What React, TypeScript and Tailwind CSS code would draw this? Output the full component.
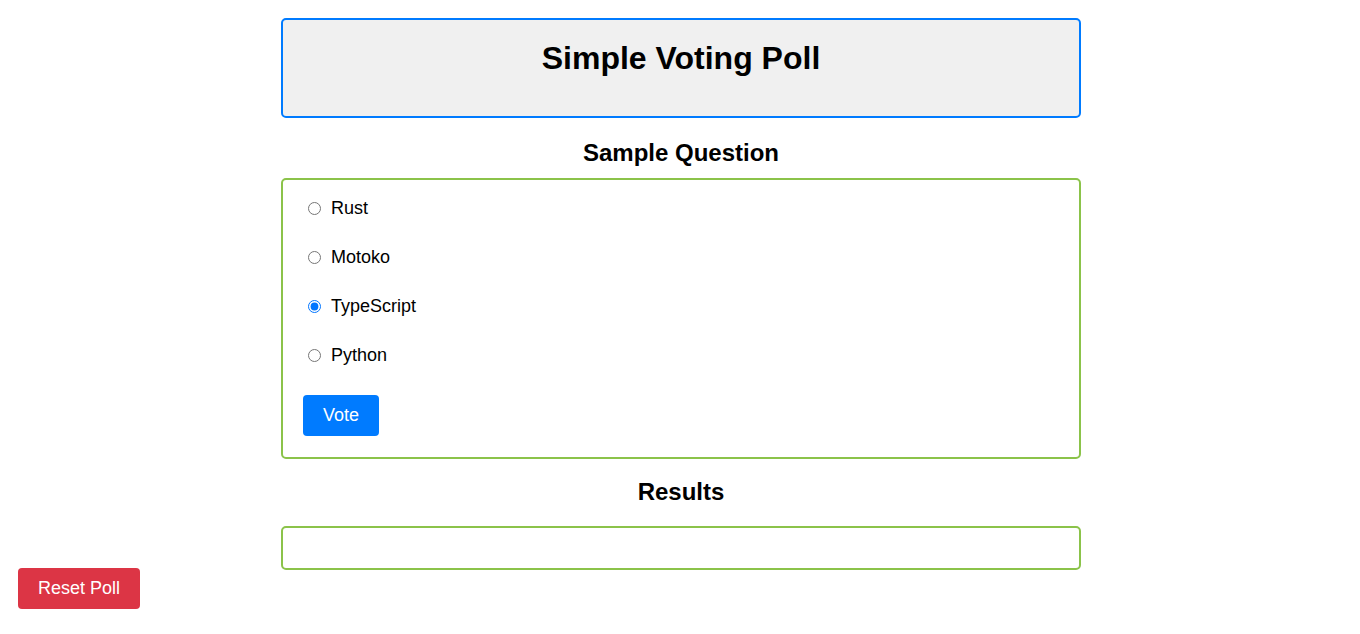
import { useState } from "react";

const options = ["Rust", "Motoko", "TypeScript", "Python"];

export default function App() {
  const [choice, setChoice] = useState("TypeScript");

  return (
    <div className="min-h-[634px] bg-white font-['Liberation_Sans',Arial,sans-serif] text-black">
      <div className="mx-auto w-[802px] pl-[2px] pt-[18px]">
        <div className="flex h-[100px] justify-center rounded-[5px] border-2 border-[#007bff] bg-[#f0f0f0] pt-[20px]">
          <h1 className="text-[32px] font-bold leading-[37px]">Simple Voting Poll</h1>
        </div>

        <h2 className="mt-[21px] text-center text-[24px] font-bold leading-[28px]">Sample Question</h2>

        <div className="mt-[11px] rounded-[5px] border-2 border-[#8bc34a] px-[20px] pb-[21px] pt-[18px]">
          <div className="flex flex-col gap-[29px]">
            {options.map((o) => (
              <label key={o} className="flex h-[20px] items-center text-[18px] leading-[20px]">
                <input
                  type="radio"
                  name="poll"
                  checked={choice === o}
                  onChange={() => setChoice(o)}
                  className="ml-[5px] mr-[10px] h-[13px] w-[13px]"
                />
                {o}
              </label>
            ))}
          </div>
          <button className="mt-[30px] h-[41px] w-[76px] rounded-[4px] bg-[#007bff] text-[18px] text-white">
            Vote
          </button>
        </div>

        <h2 className="mt-[19px] text-center text-[24px] font-bold leading-[28px]">Results</h2>

        <div className="mt-[20px] h-[44px] rounded-[5px] border-2 border-[#8bc34a]" />
      </div>

      <button className="fixed bottom-[25px] left-[18px] h-[41px] w-[122px] rounded-[4px] bg-[#dc3545] text-[18px] text-white">
        Reset Poll
      </button>
    </div>
  );
}
